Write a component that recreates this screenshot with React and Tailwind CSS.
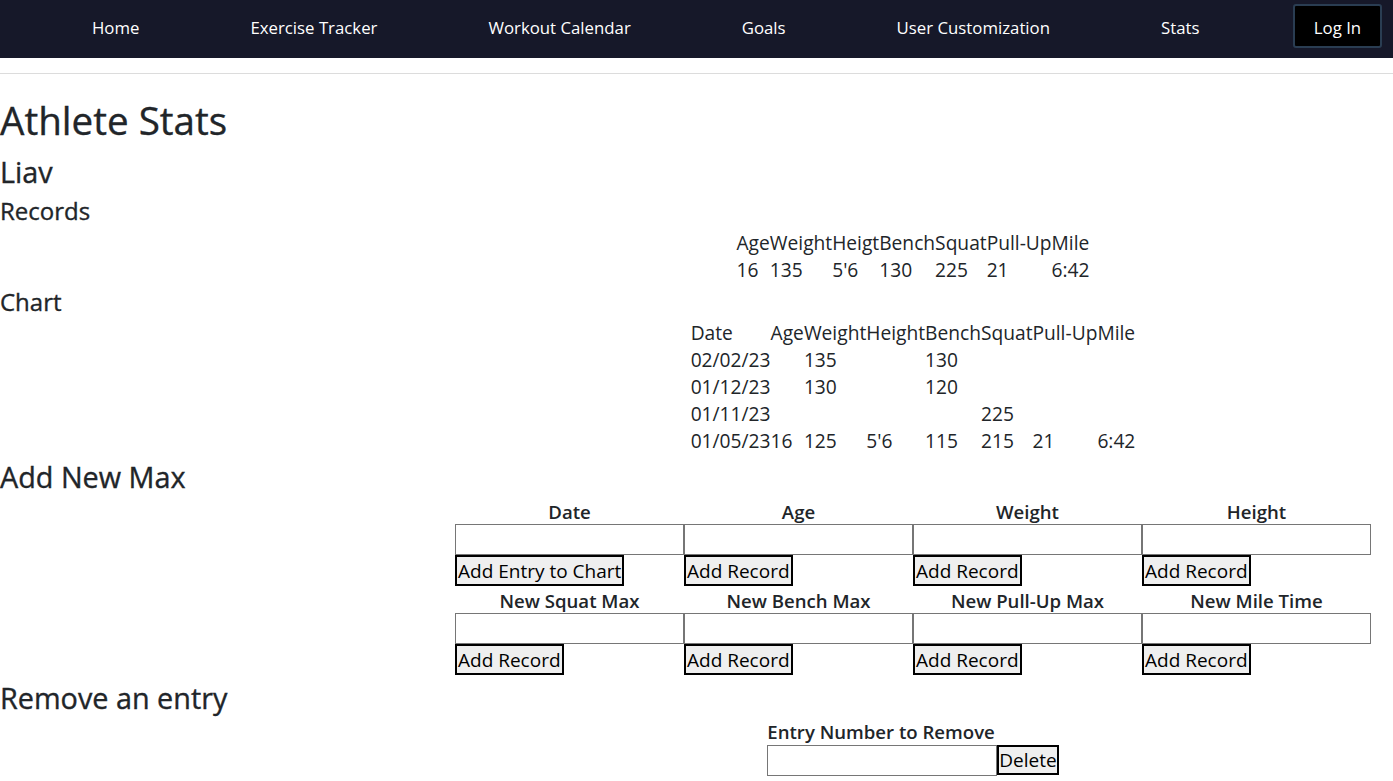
export default function App() {
  const navItems = ["Home", "Exercise Tracker", "Workout Calendar", "Goals", "User Customization", "Stats"];
  const chartRows = [
    ["02/02/23", "", "135", "", "130", "", "", ""],
    ["01/12/23", "", "130", "", "120", "", "", ""],
    ["01/11/23", "", "", "", "", "225", "", ""],
    ["01/05/23", "16", "125", "5'6", "115", "215", "21", "6:42"],
  ];
  const row1 = [
    ["Date", "Add Entry to Chart"],
    ["Age", "Add Record"],
    ["Weight", "Add Record"],
    ["Height", "Add Record"],
  ];
  const row2 = [
    ["New Squat Max", "Add Record"],
    ["New Bench Max", "Add Record"],
    ["New Pull-Up Max", "Add Record"],
    ["New Mile Time", "Add Record"],
  ];
  const Field = ({ label, btn }) => (
    <div className="flex flex-col items-stretch">
      <div className="h-[25px] text-center text-[18.6px] leading-[25px] font-semibold">{label}</div>
      <input className="h-[31px] w-full border border-[#767676] bg-white" />
      <div className="flex">
        <button className="h-[31px] border-2 border-black bg-[#efefef] px-[1px] text-[19px] leading-[26px] text-black">{btn}</button>
      </div>
    </div>
  );
  const hs = "font-medium [-webkit-text-stroke:0.35px_#212529]";
  return (
    <div className="min-h-[781px] bg-white font-['Open_Sans',sans-serif] text-[#212529]">
      <nav className="flex h-[58px] items-start bg-[#161829] pl-[92px] pr-[11px]">
        <div className="mt-[16px] flex gap-[111px] text-[16.8px] leading-[24px] text-white">
          {navItems.map((n) => (
            <span key={n}>{n}</span>
          ))}
        </div>
        <button className="ml-auto mt-[4px] h-[44px] w-[89px] rounded-[3px] border-2 border-[#2a3d52] bg-black pt-[3px] text-[16.8px] text-white">
          Log In
        </button>
      </nav>
      <div className="mt-[15px] h-px bg-[#dcdcdc]" />
      <h1 className={`mt-[22px] text-[38.6px] leading-[48px] ${hs}`}>Athlete Stats</h1>
      <h2 className={`mt-[10px] text-[28.8px] leading-[35px] ${hs}`}>Liav</h2>
      <h3 className={`mt-[7px] text-[24px] leading-[29px] ${hs}`}>Records</h3>
      <div className="ml-[455px] mt-[4px] w-[916px]">
        <table className="mx-auto border-collapse text-[19.2px] leading-[27px]">
          <tbody>
            <tr>
              {["Age", "Weight", "Heigt", "Bench", "Squat", "Pull-Up", "Mile"].map((h) => (
                <td key={h} className="p-0 text-left font-normal">{h}</td>
              ))}
            </tr>
            <tr>
              {["16", "135", "5'6", "130", "225", "21", "6:42"].map((h, i) => (
                <td key={i} className="p-0">{h}</td>
              ))}
            </tr>
          </tbody>
        </table>
      </div>
      <h3 className={`mt-[4px] text-[24px] leading-[29px] ${hs}`}>Chart</h3>
      <div className="ml-[455px] mt-[3px] w-[916px]">
        <table className="mx-auto border-collapse text-[19.2px] leading-[27px]">
          <tbody>
            <tr>
              {["Date", "Age", "Weight", "Height", "Bench", "Squat", "Pull-Up", "Mile"].map((h) => (
                <td key={h} className="p-0">{h}</td>
              ))}
            </tr>
            {chartRows.map((r, i) => (
              <tr key={i}>
                {r.map((c, j) => (
                  <td key={j} className="p-0">{c}</td>
                ))}
              </tr>
            ))}
          </tbody>
        </table>
      </div>
      <h2 className={`mt-[5px] text-[28.8px] leading-[35px] ${hs}`}>Add New Max</h2>
      <div className="ml-[455px] mt-[5px] w-[916px]">
        <div className="grid grid-cols-4">
          {row1.map(([l, b]) => (
            <Field key={l} label={l} btn={b} />
          ))}
        </div>
        <div className="mt-[2px] grid grid-cols-4">
          {row2.map(([l, b]) => (
            <Field key={l} label={l} btn={b} />
          ))}
        </div>
      </div>
      <h2 className={`mt-[5px] text-[28.8px] leading-[35px] ${hs}`}>Remove an entry</h2>
      <div className="ml-[455px] mt-[4px] flex w-[916px] justify-center">
        <div className="flex flex-col">
          <div className="text-[18.6px] leading-[26px] font-semibold">Entry Number to Remove</div>
          <div className="flex">
            <input className="h-[31px] w-[230px] border border-[#767676] bg-white" />
            <button className="h-[30px] border-2 border-black bg-[#efefef] px-0 text-[19px] leading-[25px] text-black">Delete</button>
          </div>
        </div>
      </div>
    </div>
  );
}
